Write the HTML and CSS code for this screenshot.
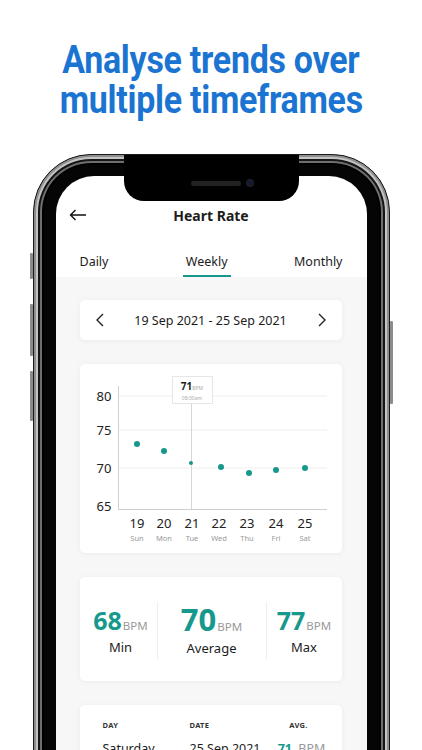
FILE: index.html
```html
<!DOCTYPE html>
<html lang="en">
<head>
  <meta charset="UTF-8">
  <meta name="viewport" content="width=device-width, initial-scale=1.0">
  <title>Heart Rate - Weekly</title>
  <link rel="stylesheet" href="styles.css">
</head>
<body>
  <h1 class="headline"><span>Analyse trends over</span><span>multiple timeframes</span></h1>

  <div class="phone">
    <div class="btn btn-mute"></div>
    <div class="btn btn-vol-up"></div>
    <div class="btn btn-vol-down"></div>
    <div class="btn btn-power"></div>
    <div class="notch">
      <div class="speaker"></div>
      <div class="camera"></div>
    </div>

    <div class="screen">
      <div class="app-bar">
        <svg class="back" width="18" height="12" viewBox="0 0 18 12">
          <path d="M17 6H1.5M6.5 1 1.5 6l5 5" fill="none" stroke="#111" stroke-width="1.4"/>
        </svg>
        <div class="app-title">Heart Rate</div>
        <span></span>
      </div>

      <div class="tabs">
        <div class="tab">Daily</div>
        <div class="tab active">Weekly</div>
        <div class="tab">Monthly</div>
      </div>

      <div class="content">
        <div class="card range">
          <svg width="8" height="14" viewBox="0 0 8 14"><path d="M7 1 1 7l6 6" fill="none" stroke="#222" stroke-width="1.4"/></svg>
          <span>19 Sep 2021 - 25 Sep 2021</span>
          <svg width="8" height="14" viewBox="0 0 8 14"><path d="M1 1l6 6-6 6" fill="none" stroke="#222" stroke-width="1.4"/></svg>
        </div>

        <div class="card chart">
          <svg class="plot" width="263" height="189" viewBox="0 0 263 189">
            <g class="grid">
              <line x1="38" y1="32" x2="247" y2="32"/>
              <line x1="38" y1="66" x2="247" y2="66"/>
              <line x1="38" y1="104" x2="247" y2="104"/>
            </g>
            <line class="axis" x1="38.5" y1="22" x2="38.5" y2="145"/>
            <line class="axis" x1="38" y1="145.5" x2="247" y2="145.5"/>
            <line class="cursor" x1="111.5" y1="40" x2="111.5" y2="145"/>
            <g class="ylabels">
              <text x="24" y="37">80</text>
              <text x="24" y="71">75</text>
              <text x="24" y="109">70</text>
              <text x="24" y="147">65</text>
            </g>
            <g class="dots">
              <circle cx="57" cy="80" r="3"/>
              <circle cx="84" cy="87" r="3"/>
              <circle cx="111" cy="99" r="2"/>
              <circle cx="141" cy="103" r="3"/>
              <circle cx="169" cy="109" r="3"/>
              <circle cx="196" cy="106" r="3"/>
              <circle cx="225" cy="104" r="3"/>
            </g>
            <g class="xlabels">
              <text x="57" y="164">19</text>
              <text x="84" y="164">20</text>
              <text x="112" y="164">21</text>
              <text x="139" y="164">22</text>
              <text x="167" y="164">23</text>
              <text x="196" y="164">24</text>
              <text x="225" y="164">25</text>
            </g>
            <g class="days">
              <text x="57" y="177">Sun</text>
              <text x="84" y="177">Mon</text>
              <text x="112" y="177">Tue</text>
              <text x="139" y="177">Wed</text>
              <text x="167" y="177">Thu</text>
              <text x="196" y="177">Fri</text>
              <text x="225" y="177">Sat</text>
            </g>
          </svg>
          <div class="tooltip">
            <div class="tip-value">71<small>BPM</small></div>
            <div class="tip-time">08:00am</div>
          </div>
        </div>

        <div class="card stats">
          <div class="stat">
            <div class="stat-value">68<small>BPM</small></div>
            <div class="stat-label">Min</div>
          </div>
          <div class="stat stat-avg">
            <div class="stat-value">70<small>BPM</small></div>
            <div class="stat-label">Average</div>
          </div>
          <div class="stat">
            <div class="stat-value">77<small>BPM</small></div>
            <div class="stat-label">Max</div>
          </div>
        </div>

        <div class="card table">
          <div class="row head">
            <span>DAY</span>
            <span>DATE</span>
            <span class="avg">AVG.</span>
          </div>
          <div class="row">
            <span>Saturday</span>
            <span>25 Sep 2021</span>
            <span class="avg"><b>71</b> BPM</span>
          </div>
        </div>
      </div>
    </div>
  </div>
</body>
</html>
```

FILE: styles.css
```css
body {
  margin: 0;
  height: 750px;
  overflow: hidden;
  background-color: #ffffff;
  font-family: "Noto Sans", Arial, sans-serif;
  color: #1c1c1c;
}

/* headline */
.headline {
  margin: 40px 0 0;
  display: flex;
  flex-direction: column;
  align-items: center;
  font-family: Roboto, sans-serif;
  font-weight: 700;
  font-size: 39px;
  line-height: 40px;
  color: #1b74d1;
  letter-spacing: -0.3px;
}
.headline span {
  display: block;
  white-space: nowrap;
  transform: scaleX(0.87);
}

/* phone frame */
.phone {
  position: relative;
  box-sizing: border-box;
  width: 357px;
  height: 720px;
  margin: 34px auto 0;
  padding: 21px 22px 0;
  border-radius: 58px;
  background-color: #050505;
  border: 1px solid #1a1a1a;
  box-shadow:
    inset 0 0 0 2px #8e8e8e,
    inset 0 0 0 4px #c4c4c4,
    inset 0 0 0 6px #161616,
    inset 0 0 0 8px #6f6f6f,
    inset 0 0 0 10px #000;
}
.btn {
  position: absolute;
  width: 3px;
  background-color: #8c8c8c;
  border-radius: 1px;
}
.btn-mute { left: -4px; top: 98px; height: 26px; }
.btn-vol-up { left: -4px; top: 149px; height: 52px; }
.btn-vol-down { left: -4px; top: 216px; height: 50px; }
.btn-power { right: -4px; top: 166px; height: 83px; }

.notch {
  position: absolute;
  left: 90px;
  top: 0;
  width: 175px;
  height: 46px;
  background-color: #000;
  border-radius: 0 0 20px 20px;
  z-index: 2;
}
.speaker {
  position: absolute;
  left: 67px;
  top: 26px;
  width: 50px;
  height: 5px;
  border-radius: 3px;
  background-color: #222;
}
.camera {
  position: absolute;
  left: 122px;
  top: 24px;
  width: 8px;
  height: 8px;
  border-radius: 50%;
  background-color: #0f1a3a;
  box-shadow: inset 0 0 0 2px #1b1b22;
}

.screen {
  height: 100%;
  background-color: #fff;
  border-radius: 38px 38px 0 0;
  overflow: hidden;
}

/* app bar */
.app-bar {
  display: grid;
  grid-template-columns: 24px 1fr 24px;
  align-items: center;
  height: 28px;
  margin-top: 25px;
  padding: 0 13px;
}
.app-title {
  text-align: center;
  font-size: 14px;
  font-weight: 700;
}

/* tabs */
.tabs {
  display: flex;
  justify-content: space-between;
  padding: 0 21px;
}
.tab {
  padding: 24px 3px 4px;
  line-height: 18px;
  font-size: 12.5px;
  border-bottom: 2px solid transparent;
}
.tab.active {
  margin-left: 11px;
  border-bottom-color: #16998c;
}

/* content */
.content {
  background-color: #f8f7f8;
  padding: 23px 25px 0 24px;
  height: 100%;
  display: flex;
  flex-direction: column;
  gap: 24px;
}
.card {
  background-color: #fff;
  border-radius: 5px;
  box-shadow: 0 1px 6px rgba(0, 0, 0, 0.05);
}
.range {
  height: 40px;
  display: flex;
  align-items: center;
  justify-content: space-between;
  padding: 0 16px;
  font-size: 12.5px;
}

.chart {
  position: relative;
  height: 189px;
}
.plot {
  display: block;
}
.grid line {
  stroke: #efefef;
  stroke-width: 1;
}
.axis {
  stroke: #cfcfcf;
  stroke-width: 1;
}
.cursor {
  stroke: #d6d6d6;
  stroke-width: 1;
}
.ylabels text {
  font-size: 13px;
  fill: #222;
  text-anchor: middle;
}
.dots circle {
  fill: #16998c;
}
.xlabels text {
  font-size: 13px;
  fill: #222;
  text-anchor: middle;
}
.days text {
  font-size: 7.5px;
  fill: #999;
  text-anchor: middle;
}
.tooltip {
  position: absolute;
  left: 92px;
  top: 12px;
  width: 41px;
  height: 28px;
  box-sizing: border-box;
  border: 1px solid #e6e6e6;
  background-color: #fff;
  text-align: center;
  padding-top: 3px;
}
.tip-value {
  font-size: 10px;
  font-weight: 700;
  line-height: 12px;
}
.tip-value small {
  font-size: 5px;
  font-weight: 400;
  color: #aaa;
}
.tip-time {
  font-size: 5px;
  color: #aaa;
  line-height: 9px;
}

/* stats */
.stats {
  height: 104px;
  box-sizing: border-box;
  padding: 4px 0 0 5px;
  display: grid;
  grid-template-columns: 72px 110px 1fr;
  align-items: center;
}
.stat {
  text-align: center;
  padding: 5px 0 3px;
}
.stat-avg {
  border-left: 1px solid #eee;
  border-right: 1px solid #eee;
}
.stat-value {
  font-size: 25px;
  font-weight: 700;
  line-height: 25px;
  color: #16998c;
}
.stat-avg .stat-value {
  font-size: 31px;
}
.stat-value small {
  font-size: 11.5px;
  font-weight: 400;
  color: #999;
  margin-left: 1px;
}
.stat-label {
  font-size: 13px;
  margin-top: 0;
}

/* table */
.table {
  padding: 13px 10px 0 23px;
  height: 80px;
}
.row {
  display: grid;
  grid-template-columns: 87px 1fr 60px;
  align-items: center;
}
.row.head {
  font-size: 7.5px;
  font-weight: 700;
  letter-spacing: 0.3px;
  color: #333;
  height: 14px;
}
.row:not(.head) {
  margin-top: 8px;
  font-size: 12.5px;
}
.avg {
  text-align: center;
}
.avg b {
  color: #16998c;
  margin-right: 3px;
}
.row .avg {
  color: #999;
}
.row.head .avg {
  color: #333;
  padding-right: 6px;
}
```
